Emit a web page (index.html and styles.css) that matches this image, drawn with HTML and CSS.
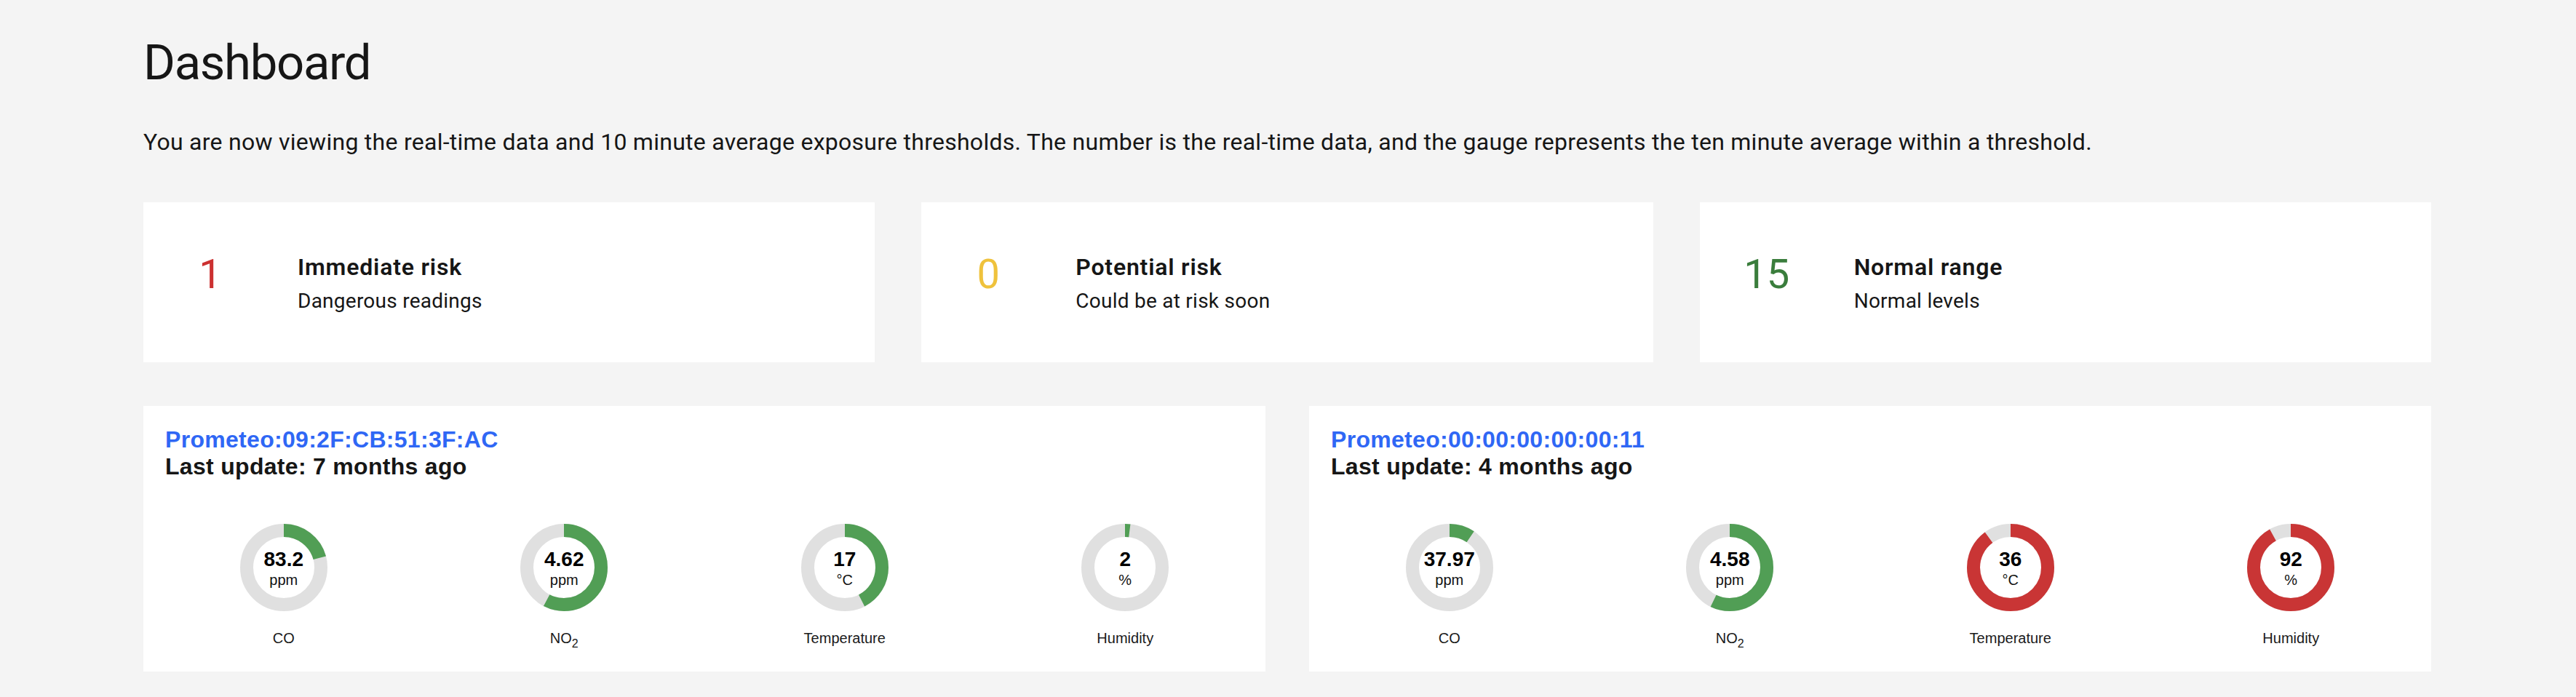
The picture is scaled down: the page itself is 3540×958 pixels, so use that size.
FILE: index.html
```html
<!DOCTYPE html>
<html lang="en">
<head>
<meta charset="utf-8">
<title>Dashboard</title>
<link rel="stylesheet" href="styles.css">
</head>
<body>
<main class="page">
  <h1 class="page-title">Dashboard</h1>
  <p class="intro">You are now viewing the real-time data and 10 minute average exposure thresholds. The number is the real-time data, and the gauge represents the ten minute average within a threshold.</p>

  <section class="summary">
    <div class="summary-card">
      <div class="summary-count count-danger">1</div>
      <div class="summary-text">
        <div class="summary-title">Immediate risk</div>
        <div class="summary-sub">Dangerous readings</div>
      </div>
    </div>
    <div class="summary-card">
      <div class="summary-count count-warning">0</div>
      <div class="summary-text">
        <div class="summary-title">Potential risk</div>
        <div class="summary-sub">Could be at risk soon</div>
      </div>
    </div>
    <div class="summary-card">
      <div class="summary-count count-ok">15</div>
      <div class="summary-text">
        <div class="summary-title">Normal range</div>
        <div class="summary-sub">Normal levels</div>
      </div>
    </div>
  </section>

  <section class="devices">
    <article class="device">
      <h2 class="device-name">Prometeo:09:2F:CB:51:3F:AC</h2>
      <div class="device-update">Last update: 7 months ago</div>
      <div class="gauges">
        <div class="gauge">
          <div class="dial">
            <svg class="ring" viewBox="0 0 120 120"><circle class="track" cx="60" cy="60" r="51"/><circle class="arc arc-ok" cx="60" cy="60" r="51" pathLength="100" transform="rotate(-90 60 60)" style="stroke-dasharray: 20.8 100"/></svg>
            <div class="readout"><span class="value">83.2</span><span class="unit">ppm</span></div>
          </div>
          <div class="label">CO</div>
        </div>
        <div class="gauge">
          <div class="dial">
            <svg class="ring" viewBox="0 0 120 120"><circle class="track" cx="60" cy="60" r="51"/><circle class="arc arc-ok" cx="60" cy="60" r="51" pathLength="100" transform="rotate(-90 60 60)" style="stroke-dasharray: 57.75 100"/></svg>
            <div class="readout"><span class="value">4.62</span><span class="unit">ppm</span></div>
          </div>
          <div class="label">NO<sub>2</sub></div>
        </div>
        <div class="gauge">
          <div class="dial">
            <svg class="ring" viewBox="0 0 120 120"><circle class="track" cx="60" cy="60" r="51"/><circle class="arc arc-ok" cx="60" cy="60" r="51" pathLength="100" transform="rotate(-90 60 60)" style="stroke-dasharray: 42.5 100"/></svg>
            <div class="readout"><span class="value">17</span><span class="unit">°C</span></div>
          </div>
          <div class="label">Temperature</div>
        </div>
        <div class="gauge">
          <div class="dial">
            <svg class="ring" viewBox="0 0 120 120"><circle class="track" cx="60" cy="60" r="51"/><circle class="arc arc-ok" cx="60" cy="60" r="51" pathLength="100" transform="rotate(-90 60 60)" style="stroke-dasharray: 2 100"/></svg>
            <div class="readout"><span class="value">2</span><span class="unit">%</span></div>
          </div>
          <div class="label">Humidity</div>
        </div>
      </div>
    </article>

    <article class="device">
      <h2 class="device-name">Prometeo:00:00:00:00:00:11</h2>
      <div class="device-update">Last update: 4 months ago</div>
      <div class="gauges">
        <div class="gauge">
          <div class="dial">
            <svg class="ring" viewBox="0 0 120 120"><circle class="track" cx="60" cy="60" r="51"/><circle class="arc arc-ok" cx="60" cy="60" r="51" pathLength="100" transform="rotate(-90 60 60)" style="stroke-dasharray: 9.5 100"/></svg>
            <div class="readout"><span class="value">37.97</span><span class="unit">ppm</span></div>
          </div>
          <div class="label">CO</div>
        </div>
        <div class="gauge">
          <div class="dial">
            <svg class="ring" viewBox="0 0 120 120"><circle class="track" cx="60" cy="60" r="51"/><circle class="arc arc-ok" cx="60" cy="60" r="51" pathLength="100" transform="rotate(-90 60 60)" style="stroke-dasharray: 57.25 100"/></svg>
            <div class="readout"><span class="value">4.58</span><span class="unit">ppm</span></div>
          </div>
          <div class="label">NO<sub>2</sub></div>
        </div>
        <div class="gauge">
          <div class="dial">
            <svg class="ring" viewBox="0 0 120 120"><circle class="track" cx="60" cy="60" r="51"/><circle class="arc arc-danger" cx="60" cy="60" r="51" pathLength="100" transform="rotate(-90 60 60)" style="stroke-dasharray: 90 100"/></svg>
            <div class="readout"><span class="value">36</span><span class="unit">°C</span></div>
          </div>
          <div class="label">Temperature</div>
        </div>
        <div class="gauge">
          <div class="dial">
            <svg class="ring" viewBox="0 0 120 120"><circle class="track" cx="60" cy="60" r="51"/><circle class="arc arc-danger" cx="60" cy="60" r="51" pathLength="100" transform="rotate(-90 60 60)" style="stroke-dasharray: 92 100"/></svg>
            <div class="readout"><span class="value">92</span><span class="unit">%</span></div>
          </div>
          <div class="label">Humidity</div>
        </div>
      </div>
    </article>
  </section>
</main>
</body>
</html>
```

FILE: styles.css
```css
html, body {
  margin: 0;
  padding: 0;
  background: #f4f4f4;
}

body {
  font-family: Roboto, "Liberation Sans", sans-serif;
  color: #161616;
}

.page {
  width: 3144px;
  margin-left: 197px;
  padding-top: 46px;
}

.page-title {
  margin: 0;
  font-size: 67px;
  line-height: 80px;
  font-weight: 400;
  letter-spacing: -1.3px;
  color: #161616;
}

.intro {
  margin: 49px 0 0;
  font-size: 32px;
  line-height: 40px;
  font-weight: 400;
  letter-spacing: 0.27px;
  color: #161616;
}

.summary {
  display: grid;
  grid-template-columns: repeat(3, 1fr);
  column-gap: 64px;
  margin-top: 63px;
}

.summary-card {
  background: #ffffff;
  height: 220px;
  box-sizing: border-box;
  padding: 69px 32px 0 64px;
  display: flex;
  align-items: flex-start;
}

.summary-count {
  width: 56px;
  margin-right: 92px;
  flex: none;
  display: flex;
  justify-content: center;
  font-size: 56px;
  line-height: 56px;
  margin-top: 2px;
  font-weight: 400;
}

.count-danger { color: #cc3131; }
.count-warning { color: #efc23c; }
.count-ok { color: #3a7d3c; }

.summary-title {
  font-size: 32px;
  line-height: 40px;
  font-weight: 600;
  letter-spacing: 0.8px;
  color: #161616;
}

.summary-sub {
  margin-top: 9px;
  font-size: 28px;
  line-height: 36px;
  font-weight: 400;
  letter-spacing: 0.25px;
  color: #161616;
}

.devices {
  display: grid;
  grid-template-columns: repeat(2, 1fr);
  column-gap: 60px;
  margin-top: 60px;
}

.device {
  background: #ffffff;
  box-sizing: border-box;
  height: 365px;
  padding: 28px 0 0;
  font-family: "Liberation Sans", Arial, sans-serif;
}

.device-name {
  margin: 0;
  padding: 0 30px;
  font-size: 32px;
  line-height: 36.8px;
  font-weight: 700;
  letter-spacing: 0.3px;
  color: #2f67f5;
}

.device-update {
  padding: 0 30px;
  font-size: 32px;
  line-height: 36.8px;
  font-weight: 700;
  letter-spacing: 0.3px;
  color: #161616;
}

.gauges {
  display: grid;
  grid-template-columns: repeat(4, 1fr);
  margin-top: 60px;
}

.gauge {
  display: flex;
  flex-direction: column;
  align-items: center;
}

.dial {
  position: relative;
  width: 120px;
  height: 120px;
}

.ring {
  display: block;
  width: 120px;
  height: 120px;
}

.track {
  fill: none;
  stroke: #e0e0e0;
  stroke-width: 18;
}

.arc {
  fill: none;
  stroke-width: 18;
}

.arc-ok { stroke: #519e55; }
.arc-danger { stroke: #c93535; }

.readout {
  position: absolute;
  inset: 0;
  display: flex;
  flex-direction: column;
  align-items: center;
  padding-top: 35px;
  box-sizing: border-box;
}

.value {
  font-size: 28px;
  line-height: 28px;
  font-weight: 700;
  color: #000000;
}

.unit {
  margin-top: 4px;
  font-size: 20px;
  line-height: 20px;
  color: #111111;
}

.label {
  margin-top: 26px;
  font-size: 20px;
  line-height: 23px;
  color: #1a1a1a;
}

.label sub {
  font-size: 16px;
  line-height: 0;
  vertical-align: -6px;
}
```
